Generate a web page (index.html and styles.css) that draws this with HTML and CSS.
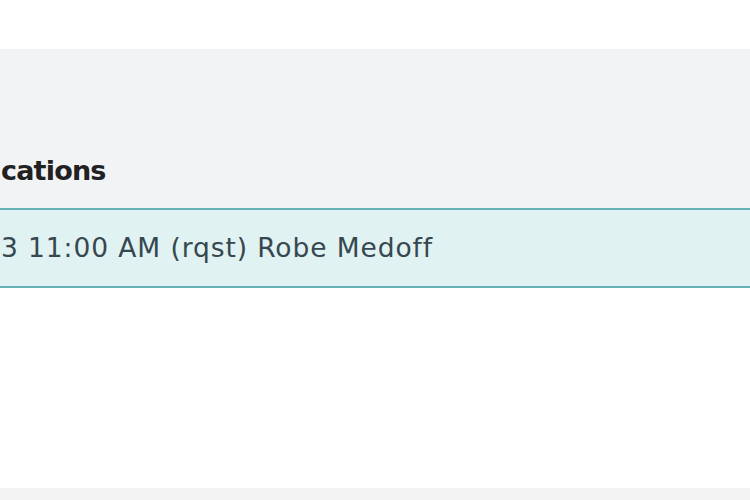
FILE: index.html
```html
<!DOCTYPE html>
<html lang="en">
<head>
<meta charset="utf-8">
<title>Notifications</title>
<link rel="stylesheet" href="styles.css">
</head>
<body>
  <div class="topbar"></div>
  <section class="panel">
    <h2 class="panel-title">cations</h2>
  </section>
  <ul class="list">
    <li class="list-item">3 11:00 AM (rqst) Robe Medoff</li>
  </ul>
  <div class="content"></div>
  <footer class="footer"></footer>
</body>
</html>
```

FILE: styles.css
```css
html, body {
  margin: 0;
  padding: 0;
  background: #ffffff;
  font-family: "DejaVu Sans", "Inter", sans-serif;
  overflow: hidden;
}

.topbar {
  height: 49px;
  background: #ffffff;
}

.panel {
  background: #f2f3f5;
  height: 159px;
  box-sizing: border-box;
  padding-top: 105px;
}

.panel-title {
  margin: 0;
  padding-left: 1px;
  font-size: 27px;
  line-height: 34px;
  font-weight: 700;
  letter-spacing: -0.8px;
  color: #212121;
}

.list {
  list-style: none;
  margin: 0;
  padding: 0;
}

.list-item {
  height: 80px;
  box-sizing: border-box;
  border-top: 2px solid #62b2b3;
  border-bottom: 2px solid #62b2b3;
  background: #e0f2f1;
  font-size: 26.5px;
  line-height: 76px;
  letter-spacing: 0.9px;
  color: #37474f;
  padding-left: 1px;
  white-space: nowrap;
}

.content {
  height: 200px;
}

.footer {
  height: 12px;
  background: #f3f3f3;
}
```
